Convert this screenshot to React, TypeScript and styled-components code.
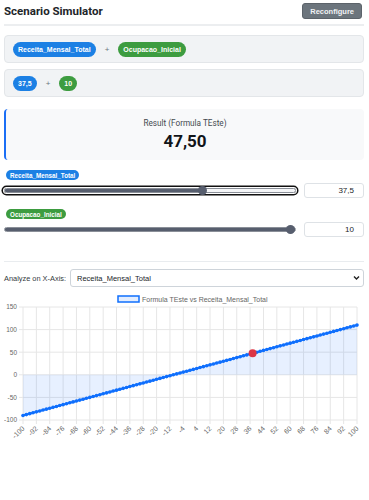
import React from "react";
import styled, { createGlobalStyle } from "styled-components";

const GlobalStyle = createGlobalStyle`
  body {
    margin: 0;
    background: #ffffff;
    font-family: "Liberation Sans", Arial, sans-serif;
    color: #212529;
  }
`;

const BLUE = "#1c80e4";
const GREEN = "#3d9c40";
const LINE = "#0f6ffd";

const Page = styled.div`
  padding: 2px 5px 0 4px;
`;

const Header = styled.div`
  display: flex;
  align-items: center;
  justify-content: space-between;
  height: 18px;
  padding-bottom: 4px;
  border-bottom: 2px solid #eceef0;
`;

const Title = styled.h1`
  margin: 0;
  font-family: Roboto, "Noto Sans", sans-serif;
  font-weight: 700;
  font-size: 11.5px;
  color: #212529;
`;

const Button = styled.button`
  height: 16px;
  margin-right: 2px;
  padding: 0 7px;
  border: 1px solid #5c636a;
  border-radius: 3px;
  background: #6c757d;
  color: #f1f3f5;
  font-family: "Liberation Sans", Arial, sans-serif;
  font-weight: 700;
  font-size: 7.5px;
`;

const Box = styled.div<{ $top: number }>`
  display: flex;
  align-items: center;
  gap: 9px;
  height: 28px;
  box-sizing: border-box;
  margin-top: ${({ $top }) => $top}px;
  padding: 0 8px;
  background: #f1f3f5;
  border: 1px solid #e3e6e9;
  border-radius: 4px;
`;

const Pill = styled.span<{ $color: string }>`
  display: inline-flex;
  align-items: center;
  height: 15px;
  padding: 0 5px;
  border-radius: 8px;
  background: ${({ $color }) => $color};
  color: #ffffff;
  font-weight: 700;
  font-size: 7px;
`;

const Plus = styled.span`
  color: #6c757d;
  font-size: 8px;
`;

const Result = styled.div`
  margin-top: 12px;
  height: 51px;
  display: flex;
  flex-direction: column;
  align-items: center;
  justify-content: center;
  gap: 3px;
  background: #f8f9fa;
  border-left: 2px solid #1a6ef5;
  border-radius: 4px;
`;

const ResultLabel = styled.div`
  font-family: Roboto, "Noto Sans", sans-serif;
  font-size: 8.2px;
  color: #444a50;
`;

const ResultValue = styled.div`
  font-family: Roboto, "Noto Sans", sans-serif;
  font-weight: 700;
  font-size: 17px;
  color: #111418;
`;

const VarBlock = styled.div<{ $top: number }>`
  display: flex;
  flex-direction: column;
  align-items: flex-start;
  margin-top: ${({ $top }) => $top}px;
`;

const Tag = styled.span<{ $color: string }>`
  display: inline-flex;
  align-items: center;
  height: 10px;
  margin-left: 2px;
  padding: 0 4px;
  border-radius: 5px;
  background: ${({ $color }) => $color};
  color: #ffffff;
  font-weight: 700;
  font-size: 6.3px;
`;

const SliderRow = styled.div`
  align-self: stretch;
  display: flex;
  align-items: center;
  gap: 8px;
  margin-top: 3px;
`;

const Range = styled.input<{ $focus?: boolean }>`
  -webkit-appearance: none;
  appearance: none;
  flex: 1;
  height: 12px;
  margin: 0;
  background: transparent;

  &::-webkit-slider-runnable-track {
    height: 5px;
    border-radius: 3px;
    box-sizing: border-box;
    border: 1px solid #8a8f98;
    background: linear-gradient(
      to right,
      #575e6e 0,
      #575e6e var(--fill),
      #f4f5f7 var(--fill),
      #f4f5f7 100%
    );
    box-shadow: ${({ $focus }) =>
      $focus ? "0 0 0 1px #ffffff, 0 0 0 2.5px #101010" : "none"};
  }

  &::-webkit-slider-thumb {
    -webkit-appearance: none;
    width: 9px;
    height: 9px;
    margin-top: -3px;
    border-radius: 50%;
    background: #575e6e;
    border: none;
  }
`;

const NumberBox = styled.div`
  width: 60px;
  height: 15px;
  box-sizing: border-box;
  display: flex;
  align-items: center;
  justify-content: flex-end;
  padding-right: 9px;
  border: 1px solid #dee2e6;
  border-radius: 3px;
  font-size: 8px;
  color: #212529;
`;

const Divider = styled.hr`
  margin: 24px 0 0;
  border: none;
  border-top: 1px solid #e9ecef;
`;

const AxisRow = styled.div`
  display: flex;
  align-items: center;
  gap: 4px;
  margin-top: 7px;
`;

const AxisLabel = styled.label`
  font-size: 7.4px;
  color: #343a40;
`;

const SelectWrap = styled.div`
  position: relative;
  flex: 1;
  display: flex;
`;

const Select = styled.select`
  -webkit-appearance: none;
  appearance: none;
  flex: 1;
  height: 18px;
  padding: 0 6px;
  border: 1px solid #ced4da;
  border-radius: 3px;
  background: #ffffff;
  font-family: "Liberation Sans", Arial, sans-serif;
  font-size: 7.5px;
  color: #212529;
`;

const Chevron = styled.svg`
  position: absolute;
  right: 4px;
  top: 6px;
  pointer-events: none;
`;

const ChartBox = styled.div`
  margin-top: 4px;
`;

const tickFont = { fontFamily: "Liberation Sans, Arial, sans-serif", fontSize: 6.5, fill: "#666" };

function Chart() {
  const x0 = 19;
  const x1 = 353;
  const yTop = 16;
  const yBottom = 129;
  const px = (v: number) => x0 + ((v + 100) / 200) * (x1 - x0);
  const py = (v: number) => yTop + ((150 - v) / 250) * (yBottom - yTop);

  const pts: [number, number][] = [];
  for (let v = -100; v <= 100; v += 2) pts.push([px(v), py(v + 10)]);
  const linePath = pts.map((p, i) => `${i ? "L" : "M"}${p[0].toFixed(2)},${p[1].toFixed(2)}`).join(" ");
  const fillPath = `${linePath} L${px(100)},${py(0)} L${px(-100)},${py(0)} Z`;

  const xTicks: number[] = [];
  for (let v = -100; v <= 100; v += 8) xTicks.push(v);
  const yTicks = [150, 100, 50, 0, -50, -100];

  return (
    <svg width="360" height="155" viewBox="0 0 360 155">
      <rect x="114" y="5" width="21" height="6" fill="rgba(15,111,253,0.12)" stroke={LINE} strokeWidth="1.5" />
      <text x="138" y="10.5" {...tickFont} fontSize={7}>
        Formula TEste vs Receita_Mensal_Total
      </text>
      {yTicks.map((t) => (
        <g key={`y${t}`}>
          <line x1={x0 - 4} x2={x1} y1={py(t)} y2={py(t)} stroke="#e6e6e6" strokeWidth="1" />
          <text x={x0 - 6} y={py(t) + 2.3} textAnchor="end" {...tickFont}>
            {t}
          </text>
        </g>
      ))}
      {xTicks.map((t) => (
        <g key={`x${t}`}>
          <line x1={px(t)} x2={px(t)} y1={yTop} y2={yBottom + 4} stroke="#e6e6e6" strokeWidth="1" />
          <text
            x={px(t) + 2}
            y={yBottom + 9}
            textAnchor="end"
            transform={`rotate(-45 ${px(t) + 2} ${yBottom + 9})`}
            {...tickFont}
            fontSize={7}
          >
            {t}
          </text>
        </g>
      ))}
      <path d={fillPath} fill="rgba(15,111,253,0.1)" />
      <path d={linePath} fill="none" stroke={LINE} strokeWidth="2" />
      {pts.map((p, i) => (
        <circle key={i} cx={p[0]} cy={p[1]} r="1.8" fill={LINE} />
      ))}
      <circle cx={px(37.5)} cy={py(47.5)} r="4" fill="#dc3545" />
    </svg>
  );
}

export default function App() {
  return (
    <Page>
      <GlobalStyle />
      <Header>
        <Title>Scenario Simulator</Title>
        <Button>Reconfigure</Button>
      </Header>

      <Box $top={9}>
        <Pill $color={BLUE}>Receita_Mensal_Total</Pill>
        <Plus>+</Plus>
        <Pill $color={GREEN}>Ocupacao_Inicial</Pill>
      </Box>
      <Box $top={6}>
        <Pill $color={BLUE}>37,5</Pill>
        <Plus>+</Plus>
        <Pill $color={GREEN}>10</Pill>
      </Box>

      <Result>
        <ResultLabel>Result (Formula TEste)</ResultLabel>
        <ResultValue>47,50</ResultValue>
      </Result>

      <VarBlock $top={10}>
        <Tag $color={BLUE}>Receita_Mensal_Total</Tag>
        <SliderRow>
          <Range
            type="range"
            min={-100}
            max={100}
            step={0.5}
            defaultValue={37.5}
            $focus
            style={{ ["--fill" as string]: `${((37.5 + 100) / 200) * 100}%` }}
          />
          <NumberBox>37,5</NumberBox>
        </SliderRow>
      </VarBlock>

      <VarBlock $top={11}>
        <Tag $color={GREEN}>Ocupacao_Inicial</Tag>
        <SliderRow>
          <Range
            type="range"
            min={0}
            max={10}
            defaultValue={10}
            style={{ ["--fill" as string]: "100%" }}
          />
          <NumberBox>10</NumberBox>
        </SliderRow>
      </VarBlock>

      <Divider />

      <AxisRow>
        <AxisLabel>Analyze on X-Axis:</AxisLabel>
        <SelectWrap>
          <Select defaultValue="Receita_Mensal_Total">
            <option>Receita_Mensal_Total</option>
            <option>Ocupacao_Inicial</option>
          </Select>
          <Chevron width="7" height="6" viewBox="0 0 7 6">
            <path d="M1 1.5 L3.5 4 L6 1.5" fill="none" stroke="#222" strokeWidth="1.4" />
          </Chevron>
        </SelectWrap>
      </AxisRow>

      <ChartBox>
        <Chart />
      </ChartBox>
    </Page>
  );
}
